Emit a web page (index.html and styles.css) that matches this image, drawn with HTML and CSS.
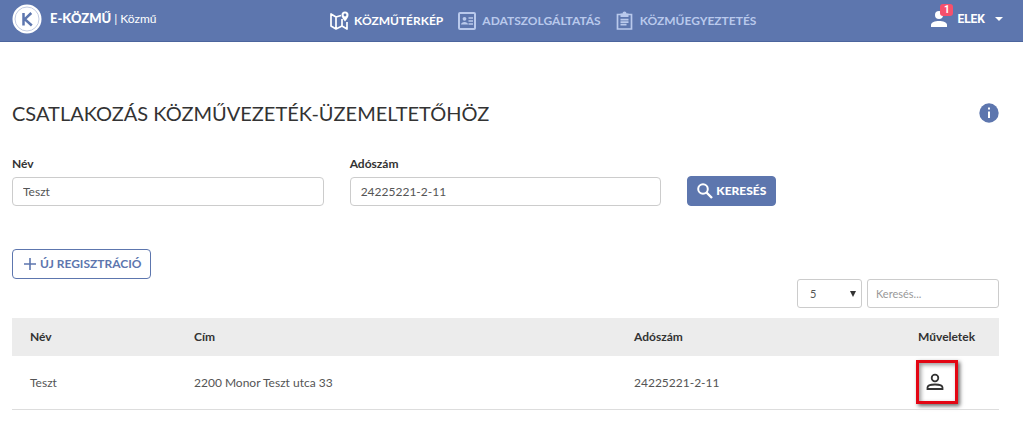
FILE: index.html
```
<!DOCTYPE html>
<html lang="hu">
<head>
    <meta charset="UTF-8">
    <meta name="viewport" content="width=device-width, initial-scale=1.0">
    <title>E-közmű | Csatlakozás közművezeték-üzemeltetőhöz</title>
    <link rel="stylesheet" href="styles.css">
</head>
<body>
    <!-- Fejléc -->
    <header>
        <a href="#" class="brand">
            <svg class="logo" viewBox="0 0 30 30" aria-hidden="true">
                <circle cx="15" cy="15" r="14.5" fill="#fff"/>
                <circle cx="15" cy="15" r="12" fill="none" stroke="#c3cce2" stroke-width="1"/>
                <path d="M11.500 9v12.500M19.300 9l-6.500 6.200 7 6.300" fill="none" stroke="#5d76ae" stroke-width="2.500"/>
            </svg>
            <span><strong>E-KÖZMŰ</strong> <small>| Közmű</small></span>
        </a>
        <nav>
            <a href="#" class="active">
                <svg viewBox="0 0 20 20" fill="none" stroke="currentColor" stroke-width="1.700" stroke-linejoin="round" aria-hidden="true">
                    <path d="M12 4.500L7 6 2 3v12l5 3 6-3 5 3V11M7 6v12M13 8v7"/>
                    <path d="M16 10.500c-2-2.500-3.500-4.500-3.500-6.500a3.500 3.500 0 0 1 7 0c0 2-1.500 4-3.500 6.500z" fill="currentColor" stroke="none"/>
                    <circle cx="16" cy="4" r="1.400" fill="#5d76ae" stroke="none"/>
                </svg>
                KÖZMŰTÉRKÉP
            </a>
            <a href="#">
                <svg viewBox="0 0 20 20" fill="none" stroke="currentColor" stroke-width="2" aria-hidden="true">
                    <rect x="2" y="2" width="16" height="16" rx="1"/>
                    <path d="M11.500 7H16M11.500 10H16M11.500 13H16" stroke-width="1.500"/>
                    <circle cx="7.500" cy="7.800" r="1.900" fill="currentColor" stroke="none"/>
                    <path d="M4 13.500c0-3.500 7-3.500 7 0z" fill="currentColor" stroke="none"/>
                </svg>
                ADATSZOLGÁLTATÁS
            </a>
            <a href="#">
                <svg viewBox="0 0 20 20" fill="none" stroke="currentColor" stroke-width="1.700" aria-hidden="true">
                    <path d="M2.500 3.500h14v14.500h-14z"/>
                    <path d="M5.500 2.500h2a2 2 0 0 1 4 0h2v3.500h-8z" fill="currentColor" stroke="none"/>
                    <path d="M5.500 8.700h8M5.500 11.200h8M5.500 13.700h6" stroke-width="1.700"/>
                </svg>
                KÖZMŰEGYEZTETÉS
            </a>
        </nav>
        <button type="button" class="user">
            <span class="avatar">
                <svg viewBox="0 0 16 16" fill="currentColor" aria-hidden="true">
                    <circle cx="8" cy="4" r="4"/>
                    <path d="M0 16v-2c0-5.300 16-5.300 16 0v2z"/>
                </svg>
                <span class="badge">1</span>
            </span>
            ELEK
            <span class="caret"></span>
        </button>
    </header>

    <main>
        <div class="title">
            <h1>CSATLAKOZÁS KÖZMŰVEZETÉK-ÜZEMELTETŐHÖZ</h1>
            <button type="button" class="info" aria-label="Információ">
                <svg viewBox="0 0 20 20" aria-hidden="true">
                    <circle cx="10" cy="10" r="9.700" fill="#5d76ae"/>
                    <path d="M10 8.500V15M10 4.500v2" stroke="#fff" stroke-width="2"/>
                </svg>
            </button>
        </div>

        <!-- Kereső űrlap -->
        <form class="search">
            <div class="field">
                <label for="nev">Név</label>
                <input type="text" id="nev" value="Teszt">
            </div>
            <div class="field">
                <label for="adoszam">Adószám</label>
                <input type="text" id="adoszam" value="24225221-2-11">
            </div>
            <button type="button" class="btn btn-primary">
                <svg viewBox="0 0 16 16" fill="none" stroke="currentColor" aria-hidden="true">
                    <circle cx="6" cy="6" r="4.800" stroke-width="2"/>
                    <path d="M9.500 9.500l5.500 5.500" stroke-width="2.400"/>
                </svg>
                KERESÉS
            </button>
        </form>

        <button type="button" class="btn btn-outline">
            <svg viewBox="0 0 12 12" fill="none" stroke="currentColor" stroke-width="1.600" aria-hidden="true">
                <path d="M6 0v12M0 6h12"/>
            </svg>
            ÚJ REGISZTRÁCIÓ
        </button>

        <!-- Táblázat -->
        <div class="filters">
            <div class="select">
                <select aria-label="Sorok száma">
                    <option>5</option>
                    <option>10</option>
                    <option>25</option>
                </select>
            </div>
            <input type="search" placeholder="Keresés..." aria-label="Keresés">
        </div>
        <table>
            <thead>
                <tr>
                    <th class="col-name">Név</th>
                    <th>Cím</th>
                    <th class="col-tax">Adószám</th>
                    <th class="col-actions">Műveletek</th>
                </tr>
            </thead>
            <tbody>
                <tr>
                    <td>Teszt</td>
                    <td>2200 Monor Teszt utca 33</td>
                    <td>24225221-2-11</td>
                    <td class="actions">
                        <button type="button" class="person" aria-label="Felhasználó">
                            <svg viewBox="0 0 18 18" fill="none" stroke="currentColor" stroke-width="1.800" aria-hidden="true">
                                <circle cx="9" cy="5" r="3.300"/>
                                <path d="M1.500 16v-1.500c0-4 15-4 15 0V16z"/>
                            </svg>
                        </button>
                    </td>
                </tr>
            </tbody>
        </table>
    </main>
</body>
</html>
```

FILE: styles.css
```
:root {
    --primary: #5d76ae;
    --primary-dark: #4c659d;
    --dark: #333;
    --text: #555;
    --border: #ccc;
    --danger: #e30613;
}

* {
    margin: 0;
    padding: 0;
    box-sizing: border-box;
}

body {
    font-family: Lato, "Liberation Sans", sans-serif;
    font-size: 12px;
    line-height: 16px;
    color: var(--text);
    background: #fff;
}

button,
input,
select {
    font: inherit;
    color: inherit;
}

button {
    cursor: pointer;
}

svg {
    display: block;
    flex: none;
}

/* Fejléc */
header {
    display: flex;
    align-items: center;
    height: 42px;
    padding: 0 20px 4px 12px;
    background: var(--primary);
    border-bottom: 1px solid var(--primary-dark);
    color: #fff;
}

.brand {
    display: flex;
    align-items: center;
    gap: 8px;
    width: 32%;
    color: #fff;
    text-decoration: none;
}

.brand strong {
    font-size: 13px;
    font-weight: 900;
}

.brand small {
    font-size: 12px;
}

.logo {
    width: 30px;
    height: 30px;
}

nav {
    display: flex;
    flex: 1;
    gap: 14px;
    padding-top: 4px;
}

nav a {
    display: flex;
    align-items: center;
    gap: 5px;
    font-size: 12px;
    font-weight: 700;
    color: #b9c9ec;
    white-space: nowrap;
    text-decoration: none;
}

nav a.active {
    color: #fff;
}

nav svg {
    width: 20px;
    height: 20px;
}

.user {
    display: flex;
    align-items: center;
    gap: 10px;
    background: none;
    border: none;
    font-family: Roboto, sans-serif;
    font-weight: 700;
}

.avatar {
    position: relative;
}

.avatar svg {
    width: 16px;
    height: 16px;
}

.badge {
    position: absolute;
    top: -7px;
    left: 9px;
    width: 13px;
    border-radius: 3px;
    background: #f6506c;
    font-size: 10px;
    line-height: 12px;
    text-align: center;
}

.caret {
    border: 4px solid transparent;
    border-top-color: #fff;
    border-bottom: none;
}

/* Tartalom */
main {
    padding: 56px 24px 24px 12px;
}

.title {
    display: flex;
    justify-content: space-between;
    align-items: center;
    margin-bottom: 28px;
}

h1 {
    font-size: 20px;
    font-weight: 400;
    line-height: 30px;
    color: var(--dark);
}

.info {
    background: none;
    border: none;
}

.info svg {
    width: 20px;
    height: 20px;
}

.search {
    display: grid;
    grid-template-columns: repeat(3, 1fr);
    gap: 26px;
    align-items: end;
    margin-bottom: 43px;
}

label {
    display: block;
    margin-bottom: 5px;
    font-weight: 700;
    color: var(--dark);
}

input,
select {
    height: 29px;
    padding: 0 10px;
    background: #fff;
    border: 1px solid var(--border);
    border-radius: 4px;
}

.field input {
    display: block;
    width: 100%;
}

.btn {
    display: flex;
    align-items: center;
    justify-self: start;
    gap: 4px;
    height: 30px;
    padding: 0 9px;
    border: 1px solid var(--primary);
    border-radius: 4px;
    font-weight: 700;
    white-space: nowrap;
}

.btn-primary {
    gap: 3px;
    background: var(--primary);
    color: #fff;
    font-weight: 900;
}

.btn-primary svg {
    width: 16px;
    height: 16px;
}

.btn-outline {
    padding-left: 11px;
    background: #fff;
    color: var(--primary);
}

.btn-outline svg {
    width: 12px;
    height: 12px;
}

/* Szűrők */
.filters {
    display: flex;
    justify-content: flex-end;
    gap: 5px;
    margin-bottom: 10px;
}

.filters input,
.filters select {
    display: block;
    border-radius: 3px;
    font-size: 11px;
}

.filters input {
    width: 132px;
    padding: 0 8px;
}

.filters input::placeholder {
    color: #999;
}

.select {
    position: relative;
}

.select::after {
    content: "";
    position: absolute;
    top: 12px;
    right: 6px;
    border: 3px solid transparent;
    border-top: 6px solid #333;
    border-bottom: none;
    pointer-events: none;
}

.select select {
    width: 65px;
    padding: 0 12px;
    appearance: none;
}

/* Táblázat */
table {
    width: 100%;
    border-collapse: collapse;
    table-layout: fixed;
}

th,
td {
    padding: 11px 0 11px 18px;
    text-align: left;
}

thead {
    background: #ececec;
    color: var(--dark);
}

tbody tr {
    border-bottom: 1px solid #ddd;
}

.col-name {
    width: 164px;
}

.col-tax {
    width: 284px;
}

.col-actions {
    width: 99px;
}

td.actions {
    padding: 4px 16px 5px;
}

.person {
    display: flex;
    align-items: center;
    width: 42px;
    height: 44px;
    padding: 0 7px;
    background: #fff;
    border: 3px solid var(--danger);
    box-shadow: 2px 2px 4px rgba(0, 0, 0, 0.6), inset 2px 2px 4px rgba(0, 0, 0, 0.4);
    color: var(--dark);
}

.person svg {
    width: 18px;
    height: 18px;
}

@media (max-width: 768px) {
    header {
        flex-wrap: wrap;
        height: auto;
    }

    .search {
        grid-template-columns: 1fr;
    }
}
```
